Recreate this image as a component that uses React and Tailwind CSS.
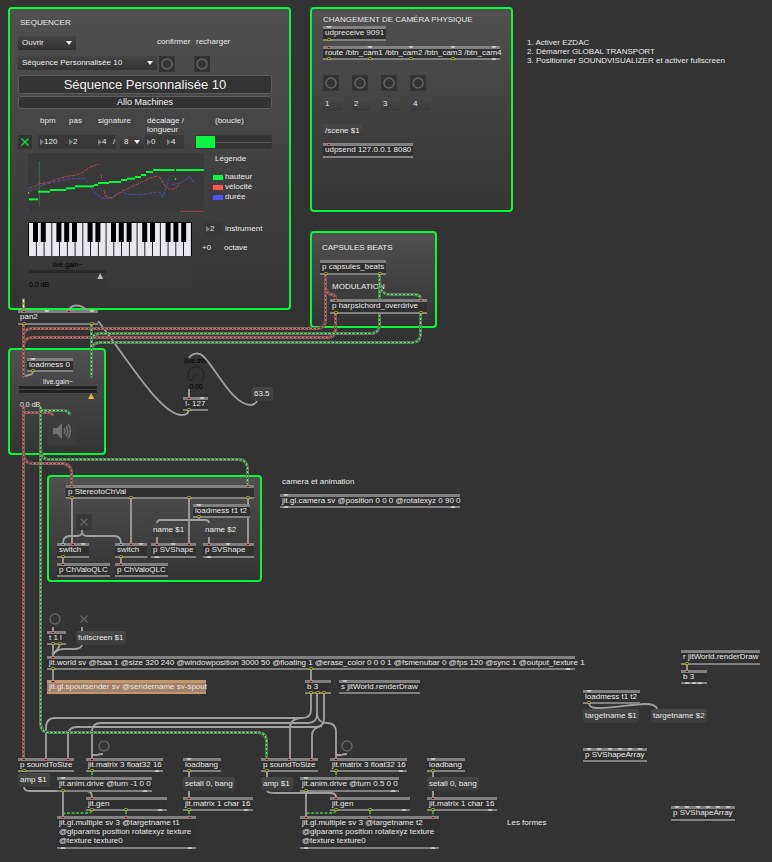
import React from "react";

/* ---------- patch data ---------- */

// Ports are [offset from the left edge, kind]: g = free, y = outlet, r = hot inlet, b = control inlet
const OBJECTS = [
  { text: "udpreceive 9091", x: 323, y: 26, w: 63, h: 15, ins: [[6, "g"]], outs: [[6, "y"]] },
  { text: "route /btn_cam1 /btn_cam2 /btn_cam3 /btn_cam4", x: 323, y: 46, w: 177, h: 14, ins: [[6, "r"], [47, "g"], [88, "g"], [130, "g"], [171, "g"]], outs: [[6, "y"], [47, "y"], [88, "y"], [130, "y"], [171, "g"]] },
  { text: "udpsend 127.0.0.1 8080", x: 323, y: 143, w: 90, h: 15, ins: [[6, "r"]] },
  { text: "p capsules_beats", x: 320, y: 260, w: 66, h: 15, outs: [[6, "y"], [60, "y"]] },
  { text: "p harpsichord_overdrive", x: 330, y: 299, w: 97, h: 15, ins: [[6, "r"], [91, "r"]], outs: [[6, "y"], [91, "y"]] },
  { text: "pan2", x: 18, y: 310, w: 80, h: 15, clear: true, ins: [[6, "r"], [29, "g"], [51, "r"], [74, "g"]], outs: [[6, "y"], [74, "y"]] },
  { text: "loadmess 0", x: 27, y: 358, w: 46, h: 14, ins: [[6, "g"]], outs: [[6, "y"]] },
  { text: "!- 127", x: 183, y: 397, w: 25, h: 14, ins: [[6, "r"], [19, "g"]], outs: [[6, "y"]] },
  { text: "p StereotoChVal", x: 66, y: 485, w: 188, h: 14, ins: [[6, "r"], [182, "r"]], outs: [[6, "y"], [65, "y"], [123, "y"], [182, "y"]] },
  { text: "loadmess t1 t2", x: 193, y: 504, w: 57, h: 14, ins: [[6, "g"]], outs: [[6, "y"]] },
  { text: "switch", x: 57, y: 543, w: 32, h: 15, ins: [[6, "b"], [16, "r"], [26, "g"]], outs: [[6, "y"]] },
  { text: "switch", x: 115, y: 543, w: 32, h: 15, ins: [[6, "b"], [16, "r"], [26, "g"]], outs: [[6, "y"]] },
  { text: "p SVShape", x: 151, y: 543, w: 45, h: 15, ins: [[6, "r"], [22, "g"], [38, "r"]], outs: [[6, "g"]] },
  { text: "p SVShape", x: 203, y: 543, w: 51, h: 15, ins: [[6, "r"], [25, "g"], [45, "r"]], outs: [[6, "g"]] },
  { text: "p ChValoQLC", x: 57, y: 563, w: 53, h: 14, ins: [[6, "r"]] },
  { text: "p ChValoQLC", x: 115, y: 563, w: 53, h: 14, ins: [[6, "r"]] },
  { text: "t 1 l", x: 47, y: 631, w: 19, h: 14, ins: [[6, "r"]], outs: [[6, "y"], [13, "y"]] },
  { text: "jit.world sv @fsaa 1 @size 320 240 @windowposition 3000 50 @floating 1 @erase_color 0 0 0 1 @fsmenubar 0 @fps 120 @sync 1 @output_texture 1", x: 47, y: 656, w: 528, h: 14, ins: [[6, "r"]], outs: [[6, "y"], [264, "y"], [521, "g"]] },
  { text: "jit.gl.spoutsender sv @sendername sv-spout", x: 47, y: 680, w: 159, h: 14, tan: true, ins: [[6, "r"]] },
  { text: "b 3", x: 305, y: 680, w: 26, h: 14, ins: [[6, "r"]], outs: [[6, "y"], [13, "y"], [19, "y"]] },
  { text: "s jitWorld.renderDraw", x: 339, y: 680, w: 81, h: 14, ins: [[6, "g"]] },
  { text: "r jitWorld.renderDraw", x: 681, y: 650, w: 79, h: 15, outs: [[6, "y"]] },
  { text: "b 3", x: 681, y: 670, w: 26, h: 14, ins: [[6, "r"]], outs: [[6, "g"], [13, "g"], [19, "g"]] },
  { text: "loadmess t1 t2", x: 583, y: 690, w: 57, h: 14, ins: [[6, "g"]], outs: [[6, "y"]] },
  { text: "p SVShapeArray", x: 583, y: 748, w: 64, h: 14, ins: [[6, "g"], [16, "g"], [27, "g"], [37, "g"], [47, "g"], [57, "g"]] },
  { text: "p SVShapeArray", x: 671, y: 806, w: 64, h: 15, ins: [[6, "g"], [16, "g"], [27, "g"], [37, "g"], [47, "g"], [57, "g"]] },

  { text: "p soundToSize", x: 18, y: 758, w: 56, h: 14, ins: [[6, "r"], [28, "r"], [50, "r"]], outs: [[6, "y"]] },
  { text: "jit.matrix 3 float32 16", x: 86, y: 758, w: 77, h: 14, ins: [[6, "r"]], outs: [[6, "y"], [71, "g"]] },
  { text: "loadbang", x: 183, y: 758, w: 38, h: 14, ins: [[6, "g"]], outs: [[6, "y"]] },
  { text: "jit.anim.drive @turn -1 0 0", x: 57, y: 777, w: 95, h: 15, ins: [[6, "g"]], outs: [[6, "y"], [88, "g"]] },
  { text: "jit.gen", x: 86, y: 797, w: 81, h: 14, ins: [[6, "r"]], outs: [[6, "y"], [40, "y"], [74, "g"]] },
  { text: "jit.matrix 1 char 16", x: 183, y: 797, w: 70, h: 14, ins: [[6, "r"]], outs: [[6, "y"], [63, "g"]] },
  { text: "jit.gl.multiple sv 3 @targetname t1\n@glparams position rotatexyz texture\n@texture texture0", x: 57, y: 816, w: 139, h: 33, ins: [[6, "r"], [69, "r"], [133, "r"]], outs: [[6, "g"], [133, "g"]] },

  { text: "p soundToSize", x: 261, y: 758, w: 57, h: 14, ins: [[6, "r"], [28, "r"], [50, "r"]], outs: [[6, "y"]] },
  { text: "jit.matrix 3 float32 16", x: 330, y: 758, w: 77, h: 14, ins: [[6, "r"]], outs: [[6, "y"], [71, "g"]] },
  { text: "loadbang", x: 427, y: 758, w: 38, h: 14, ins: [[6, "g"]], outs: [[6, "y"]] },
  { text: "jit.anim.drive @turn 0.5 0 0", x: 300, y: 777, w: 99, h: 15, ins: [[6, "g"]], outs: [[6, "y"], [93, "g"]] },
  { text: "jit.gen", x: 330, y: 797, w: 80, h: 14, ins: [[6, "r"]], outs: [[6, "y"], [40, "y"], [74, "g"]] },
  { text: "jit.matrix 1 char 16", x: 427, y: 797, w: 70, h: 14, ins: [[6, "r"]], outs: [[6, "y"], [63, "g"]] },
  { text: "jit.gl.multiple sv 3 @targetname t2\n@glparams position rotatexyz texture\n@texture texture0", x: 300, y: 816, w: 139, h: 33, ins: [[6, "r"], [69, "r"], [133, "r"]], outs: [[6, "g"], [133, "g"]] },
  { text: "jit.gl.camera sv @position 0 0 0 @rotatexyz 0 90 0", x: 280, y: 494, w: 180, h: 14, ins: [[6, "g"]], outs: [[6, "g"], [173, "g"]] },
];

const MESSAGES = [
  { text: "1", x: 323, y: 97, w: 19 },
  { text: "2", x: 352, y: 97, w: 19 },
  { text: "3", x: 381, y: 97, w: 19 },
  { text: "4", x: 411, y: 97, w: 19 },
  { text: "/scene $1", x: 323, y: 124, w: 39 },
  { text: "63.5", x: 252, y: 387, w: 21 },
  { text: "name $1", x: 151, y: 523, w: 36 },
  { text: "name $2", x: 203, y: 523, w: 36 },
  { text: "fullscreen $1", x: 76, y: 631, w: 50 },
  { text: "amp $1", x: 18, y: 773, w: 32 },
  { text: "amp $1", x: 261, y: 777, w: 32 },
  { text: "setall 0, bang", x: 183, y: 777, w: 52 },
  { text: "setall 0, bang", x: 427, y: 777, w: 52 },
  { text: "targetname $1", x: 583, y: 709, w: 56 },
  { text: "targetname $2", x: 651, y: 709, w: 56 },
];

const COMMENTS = [
  { text: "CHANGEMENT DE CAMÉRA PHYSIQUE", x: 323, y: 15 },
  { text: "CAPSULES BEATS", x: 322, y: 243 },
  { text: "MODULATION", x: 332, y: 282 },
  { text: "camera et animation", x: 282, y: 477 },
  { text: "Les formes", x: 507, y: 818 },
];

const BANGS = [
  { x: 323, y: 75, boxed: true },
  { x: 352, y: 75, boxed: true },
  { x: 381, y: 75, boxed: true },
  { x: 410, y: 75, boxed: true },
  { x: 47, y: 611 },
  { x: 96, y: 738 },
  { x: 339, y: 738 },
];

const CONTROL_WIRES = [
  "M69 310 C72 304 80 304 87 310",
  "M98 321 C125 355 160 415 182 415 Q188 415 189 410",
  "M189 358 C192 353 199 352 203 356 C216 368 232 405 251 405 Q256 404 257 401",
  "M189 389 V397",
  "M33 372 Q33 375 24 376",
  "M72 499 V543", "M131 499 V543", "M189 499 V543", "M248 499 V543",
  "M82 530 V533 Q81 536 76 536 H70 Q63 536 63 543",
  "M82 533 Q83 536 88 536 H114 Q121 536 121 543",
  "M63 558 V563", "M121 558 V563",
  "M157 523 Q157 520 161 520 H205 Q209 520 209 523",
  "M157 536 V543", "M209 536 V543", "M199 516 V520",
  "M53 627 V631", "M82 627 V631",
  "M53 645 V656", "M60 645 Q58 649 53 654",
  "M82 645 Q81 649 74 649 H64 Q56 649 53 655",
  "M53 670 V680", "M311 670 V680",
  "M311 694 V710 Q311 718 302 718 H55 Q46 718 46 728 V758",
  "M317 694 V714 Q317 723 308 723 H101 Q92 723 92 732 V758",
  "M324 694 V719 Q324 727 315 727 H77 Q68 727 68 736 V758",
  "M300 718 Q290 719 290 728 V758",
  "M317 714 Q318 723 327 723 Q336 723 336 732 V758",
  "M322 726 Q312 727 312 736 V758",
  "M92 755 H97 Q100 754 103 754",
  "M336 755 H341 Q344 754 347 754",
  "M24 787 Q24 791 30 791 H86 Q92 791 92 797",
  "M267 772 V777", "M267 791 Q268 793 275 793 H330 Q336 793 336 797",
  "M63 792 V816", "M306 792 V816",
  "M189 772 V777", "M189 790 V797", "M433 772 V777", "M433 790 V797",
  "M687 665 V670",
  "M589 704 Q590 708 597 708 C620 708 630 704 645 704 Q656 704 657 709",
];

const RED_WIRES = [
  "M326 275 V320 Q326 329 317 329 H33 Q24 329 24 337",
  "M326 288 Q328 295 332 295 Q336 295 336 299",
  "M336 314 V330 Q336 338 327 338 H33 Q24 338 24 347",
  "M24 325 V378",
  "M24 407 V758",
  "M24 413 H47 Q53 413 53 416",
  "M24 454 Q24 464 34 464 H62 Q72 464 72 474 V485",
];

const GREEN_WIRES = [
  "M380 275 V324 Q380 334 371 334 H101 Q92 334 92 342",
  "M380 286 Q382 295 390 295 H415 Q421 295 421 299",
  "M421 314 V334 Q421 343 412 343 H101 Q92 343 92 351",
  "M92 325 V378",
  "M41 407 V723 Q41 733 50 733 H258 Q267 733 267 742 V758",
  "M41 411 H64 Q70 411 70 416",
  "M41 451 Q42 460 50 460 H239 Q248 460 248 470 V485",
];

const MATRIX_WIRES = [
  "M92 772 V789", "M92 811 Q91 813 86 813 H66 Q63 813 63 816", "M126 811 V816", "M189 811 V816",
  "M336 772 V789", "M336 811 Q335 813 330 813 H309 Q306 813 306 816", "M370 811 V816", "M433 811 V816",
];

/* ---------- canvas pieces ---------- */

const PORT = {
  g: "bg-[#c4c4c4]",
  y: "border border-[#a5a53a] bg-[#222]",
  r: "border border-[#b07a70] bg-[#222]",
  b: "border border-[#7fb3bd] bg-[#222]",
};

function Port({ offset, kind, outlet }) {
  const free = kind === "g";
  return (
    <span
      className={`absolute w-[5px] -translate-x-1/2 ${free ? "h-[2px]" : "h-[3px]"} ${
        outlet ? "bottom-0 rounded-t-full" : "top-0 rounded-b-full"
      } ${PORT[kind]}`}
      style={{ left: offset }}
    />
  );
}

function PatchObject({ text, x, y, w, h, tan, clear, ins = [], outs = [] }) {
  return (
    <div
      className={`absolute flex flex-col border-t-[3px] border-b-2 ${
        tan ? "border-[#bf9a6c] bg-[#a07f6b]" : clear ? "border-[#808080]" : "border-[#808080] bg-[#303030]"
      }`}
      style={{ left: x, top: y, width: w, height: h }}
    >
      <div className="absolute inset-x-0 -top-[3px] -bottom-[2px]">
        {ins.map(([o, k]) => <Port key={o} offset={o} kind={k} />)}
        {outs.map(([o, k]) => <Port key={o} offset={o} kind={k} outlet />)}
      </div>
      <p className="relative -mt-px whitespace-pre pl-[2px] leading-[9px]">{text}</p>
    </div>
  );
}

function Message({ text, x, y, w }) {
  return (
    <button
      type="button"
      className="absolute h-[14px] rounded-[3px] bg-linear-to-b from-[#484848] to-[#3a3a3a] pl-[2px] text-left leading-[12px] whitespace-nowrap"
      style={{ left: x, top: y, width: w }}
    >
      {text}
    </button>
  );
}

function Bang({ label = "bang", boxed }) {
  return (
    <button type="button" aria-label={label} className={`flex size-4 items-center justify-center ${boxed ? "bg-[#333]" : ""}`}>
      <svg viewBox="0 0 12 12" className="size-3" fill="none" stroke="#646464" strokeWidth="1.4">
        <circle cx="6" cy="6" r="5" />
      </svg>
    </button>
  );
}

function Toggle({ label, green }) {
  return (
    <label className={`relative flex items-center justify-center ${green ? "size-[14px] bg-[#333]" : "size-4"}`}>
      <input type="checkbox" aria-label={label} defaultChecked={green} className="absolute inset-0 appearance-none" />
      <svg viewBox="0 0 8 8" className="size-2" fill="none" stroke={green ? "#08e83c" : "#666"} strokeWidth="1.2">
        <path d="M.5 .5 L7.5 7.5 M7.5 .5 L.5 7.5" />
      </svg>
    </label>
  );
}

function SignalWire({ d, base, color }) {
  return (
    <g>
      <path d={d} stroke={base} strokeWidth="3" />
      <path d={d} stroke="#343434" strokeWidth="1.2" />
      <path d={d} stroke={color} strokeWidth="1.2" strokeDasharray="2.6 1.4" />
    </g>
  );
}

function Wires() {
  return (
    <svg className="pointer-events-none absolute top-0 left-0" width="772" height="862" fill="none">
      {MATRIX_WIRES.map((d) => <path key={d} d={d} stroke="#3fbf4a" strokeWidth="1.6" strokeDasharray="3 1.5" />)}
      {CONTROL_WIRES.map((d) => <path key={d} d={d} stroke="#a0a0a0" strokeWidth="1.8" />)}
      <g transform="translate(-.5 -.5)">
        {RED_WIRES.map((d) => <SignalWire key={d} d={d} base="#7a6464" color="#fa5c5c" />)}
        {GREEN_WIRES.map((d) => <SignalWire key={d} d={d} base="#667a66" color="#4df25a" />)}
        <path d="M24 299 V311" stroke="#808064" strokeWidth="3" />
        <path d="M24 300 V311" stroke="#eeeea0" strokeWidth="1.2" strokeDasharray="3 2" />
      </g>
    </svg>
  );
}

const PANEL = "absolute rounded-[4px] border-2 border-[#08f73c] bg-linear-to-b from-[#505050] to-[#343434]";

/* ---------- sequencer ---------- */

function Caret() {
  return (
    <svg viewBox="0 0 6 4" className="pointer-events-none absolute top-1/2 right-[4px] h-[4px] w-[6px] -translate-y-1/2" fill="#eee">
      <path d="M0 0 H6 L3 4 Z" />
    </svg>
  );
}

function Menu({ label, value, className }) {
  return (
    <div className={`relative h-[14px] bg-linear-to-b from-[#454545] to-[#333] ${className}`}>
      <select aria-label={label} defaultValue={value} className="h-full w-full appearance-none pl-[4px]">
        <option>{value}</option>
      </select>
      <Caret />
    </div>
  );
}

function NumberBox({ label, value, className, plus }) {
  return (
    <label className={`flex h-[14px] items-center bg-[#383838] pl-[2px] ${className}`}>
      {!plus && (
        <svg viewBox="0 0 4 6" className="h-[6px] w-[4px] shrink-0" fill="#808080">
          <path d="M0 0 L4 3 L0 6 Z" />
        </svg>
      )}
      <input aria-label={label} defaultValue={value} className="w-full min-w-0 bg-transparent" />
    </label>
  );
}

function Chart() {
  const steps = [
    [84, 87, 129], [87, 114, 148], [114, 150, 125], [150, 198, 120], [198, 225, 115], [225, 282, 109], [282, 294, 105],
    [294, 327, 99], [327, 363, 96], [363, 381, 90], [381, 405, 86], [405, 423, 81], [423, 438, 75], [438, 459, 66],
    [459, 524, 60], [528, 612, 60],
  ];
  return (
    <svg viewBox="84 9 528 177" className="h-[59px] w-[176px] bg-[#393939]" fill="none">
      <path d="M118 33 V167" stroke="#3c6f48" strokeWidth="3" />
      <g strokeWidth="3" strokeDasharray="12 3">
        <path stroke="#4c4ca8" d="M87 122 L110 116 L125 105 L150 100 L180 92 L215 86 H255 L265 98 M272 112 L285 128 L305 145 H338 L350 130 L365 127 L385 133 H435 L460 127 H480 L488 143 L500 108 L509 80 M515 103 L535 101 L550 95 L570 79 L580 97 M84 178 H88" />
        <path stroke="#a84c4c" d="M85 116 L100 110 L118 101 L145 98 L170 88 L200 79 L225 76 L250 66 L270 52 L290 43 L299 43 M304 74 V86 M311 120 L318 141 L335 143 L350 135 L370 122 L400 108 L430 95 L450 84 L475 77 L483 88 L495 108 L510 118 L525 116 L537 105" />
      </g>
      <path d="M540 184 H610" stroke="#8f5050" strokeWidth="3" />
      <path d="M527 84 V90" stroke="#0bf540" strokeWidth="3" />
      {steps.map(([a, b, y]) => <path key={a} d={`M${a} ${y} H${b}`} stroke="#08f73c" strokeWidth="6" />)}
    </svg>
  );
}

function Keyboard() {
  const white = Array.from({ length: 21 }, (_, i) => i);
  const black = white.filter((i) => ![2, 6].includes(i % 7));
  return (
    <svg viewBox="0 0 164 34" className="h-[34px] w-[164px]" role="img" aria-label="clavier">
      <rect width="164" height="34" fill="#000" />
      {white.map((i) => <rect key={i} x={1 + i * 7.75} y="1" width="6.9" height="33" fill="#e8e8ee" />)}
      {black.map((i) => <rect key={i} x={5 + i * 7.8} y="0" width="5" height="20" fill="#000" />)}
    </svg>
  );
}

function Legend({ color, children }) {
  return (
    <li className="flex h-[10px] items-center gap-[2px]">
      <span className={`h-[5px] w-[10px] ${color}`} />
      {children}
    </li>
  );
}

const GAIN_THUMB =
  "block h-[6px] w-full appearance-none bg-transparent [&::-webkit-slider-thumb]:size-[6px] [&::-webkit-slider-thumb]:appearance-none [&::-webkit-slider-thumb]:[clip-path:polygon(50%_0,100%_100%,0_100%)]";

function Sequencer() {
  return (
    <section className={`${PANEL} top-[7px] left-[8px] w-[283px] px-[8px] pt-[9px] pb-[19px]`}>
      <div className="w-[254px]">
        <h2 className="pl-[2px] leading-[10px]">SEQUENCER</h2>
        <div className="mt-2 flex h-[14px]">
          <Menu label="Fichier" value="Ouvrir" className="w-[58px]" />
          <span className="ml-[81px] w-[39px] leading-[11px]">confirmer</span>
          <span className="leading-[11px]">recharger</span>
        </div>
        <div className="mt-[6px] flex h-4">
          <Menu label="Séquence" value="Séquence Personnalisée 10" className="w-[139px]" />
          <div className="ml-[2px] flex gap-[19px]">
            <Bang label="confirmer" boxed />
            <Bang label="recharger" boxed />
          </div>
        </div>
        <div className="mt-[3px] h-[19px] rounded-[3px] border border-[#5c5c5c] bg-[#333] text-center text-[13px] leading-[18px] text-[#f0f0f0]">
          Séquence Personnalisée 10
        </div>
        <div className="mt-[2px] h-[13px] rounded-[3px] border border-[#5c5c5c] bg-[#333] text-center text-[9px] leading-[11px] text-[#f0f0f0]">
          Allo Machines
        </div>
        <div className="mt-[7px] flex h-[19px] pl-[22px] leading-[9px]">
          <span className="w-[29px]">bpm</span>
          <span className="w-[29px]">pas</span>
          <span className="w-[49px]">signature</span>
          <span className="w-[68px]">décalage /<br />longueur</span>
          <span>(boucle)</span>
        </div>
        <div className="flex h-[14px]">
          <Toggle label="lecture" green />
          <div className="ml-[6px] flex w-[78px] bg-[#383838]">
            <NumberBox label="bpm" value="120" className="w-[29px]" />
            <NumberBox label="pas" value="2" className="w-[29px]" />
            <NumberBox label="signature" value="4" className="w-[17px]" />
            <span className="leading-[13px]">/</span>
          </div>
          <Menu label="division" value="8" className="ml-1 w-[24px]" />
          <div className="ml-px flex w-[39px]">
            <NumberBox label="décalage" value="0" className="w-5" />
            <NumberBox label="longueur" value="4" className="w-[19px]" />
          </div>
          <input
            type="range"
            aria-label="boucle"
            defaultValue="0"
            className="ml-[11px] h-[14px] w-[77px] appearance-none border border-[#383838] bg-[#333] bg-linear-to-b from-[#5c5c5c] to-[#5c5c5c] bg-[length:100%_1px] bg-center bg-no-repeat [&::-webkit-slider-thumb]:h-3 [&::-webkit-slider-thumb]:w-[19px] [&::-webkit-slider-thumb]:appearance-none [&::-webkit-slider-thumb]:bg-[#08f73c]"
          />
        </div>
        <div className="mt-1 flex h-[59px] pl-[10px]">
          <Chart />
          <div className="pl-[9px]">
            <h3 className="pl-[2px] leading-[12px]">Légende</h3>
            <ul className="mt-[7px]">
              <Legend color="bg-[#08f73c]">hauteur</Legend>
              <Legend color="bg-[#ff5252]">vélocité</Legend>
              <Legend color="bg-[#5252ff]">durée</Legend>
            </ul>
          </div>
        </div>
        <div className="mt-[10px] flex h-[34px] pl-[10px]">
          <Keyboard />
          <div className="flex flex-col gap-[5px] pl-2">
            <div className="flex items-center gap-[2px] pl-1">
              <NumberBox label="instrument" value="2" className="w-[19px]" />
              <span>instrument</span>
            </div>
            <div className="flex items-center gap-px">
              <NumberBox label="octave" value="+0" className="w-[23px]" plus />
              <span>octave</span>
            </div>
          </div>
        </div>
        <div className="mt-[5px] flex pl-[11px]">
          <div className="w-[77px] text-[7px] leading-[8px] text-black">
            <p className="text-center">live.gain~</p>
            <div className="mt-px h-[3px] bg-[#2a2a2a]" />
            <input type="range" aria-label="live.gain~" defaultValue="96" className={`${GAIN_THUMB} [&::-webkit-slider-thumb]:bg-[#b8b8b8]`} />
            <p className="mt-[2px]">0.0 dB</p>
          </div>
          <div className="h-[26px] w-[86px] bg-[#393939]" />
        </div>
      </div>
    </section>
  );
}

function Output() {
  return (
    <section className={`${PANEL} top-[348px] left-[8px] w-[98px] px-[9px] pt-[27px] pb-[8px]`}>
      <div className="w-[78px] text-[7px] leading-[9px]">
        <p className="text-center">live.gain~</p>
        <div className="h-[3px] bg-[#222]" />
        <div className="mt-px h-[3px] bg-[#222]" />
        <input type="range" aria-label="volume" defaultValue="96" className={`${GAIN_THUMB} [&::-webkit-slider-thumb]:bg-[#f5b81c]`} />
        <p className="mt-px pl-px">0.0 dB</p>
      </div>
      <button type="button" aria-label="audio" className="mt-[7px] ml-[28px] flex size-[29px] items-center justify-center bg-[#3c3c3c]">
        <svg viewBox="0 0 20 18" className="h-[18px] w-[20px]" fill="none" stroke="#727272" strokeWidth="1.6">
          <path d="M1 6 H5 L10 1 V17 L5 12 H1 Z" fill="#727272" stroke="none" />
          <path d="M12 6 Q14 9 12 12 M14 4 Q17.5 9 14 14 M16 2 Q21 9 16 16" />
        </svg>
      </button>
    </section>
  );
}

function Dial() {
  return (
    <div className="absolute top-[357px] left-[182px] flex w-7 flex-col items-center text-[7px] leading-[8px] text-black">
      <span>live.dial</span>
      <svg viewBox="0 0 18 18" className="mt-px size-[18px]" fill="none" stroke="#202020" strokeWidth="1">
        <path d="M4 15 A8 8 0 1 1 14 15 M4 15 L9 8" />
      </svg>
      <span className="-mt-px">0.00</span>
    </div>
  );
}

export default function App() {
  return (
    <main className="relative min-h-screen bg-[#333] font-['Liberation_Sans',Arial,sans-serif] text-[8px] leading-[10px] text-[#e8e8e8]">
      <Sequencer />
      <div className={`${PANEL} top-[7px] left-[310px] h-[205px] w-[203px]`} />
      <div className={`${PANEL} top-[231px] left-[310px] h-[97px] w-[127px]`} />
      <Output />
      <div className={`${PANEL} top-[475px] left-[47px] h-[107px] w-[215px]`} />
      <Dial />

      <ul className="absolute top-[38px] left-[527px] leading-[9px]">
        <li>1. Activer EZDAC</li>
        <li>2. Démarrer GLOBAL TRANSPORT</li>
        <li>3. Positionner SOUNDVISUALIZER et activer fullscreen</li>
      </ul>
      {COMMENTS.map(({ text, x, y }) => (
        <p key={text} className="absolute whitespace-nowrap" style={{ left: x, top: y }}>{text}</p>
      ))}

      <Wires />

      {OBJECTS.map((o) => <PatchObject key={`${o.x}-${o.y}`} {...o} />)}
      {MESSAGES.map((m) => <Message key={`${m.x}-${m.y}`} {...m} />)}
      {BANGS.map(({ x, y, boxed }) => (
        <div key={`${x}-${y}`} className="absolute" style={{ left: x, top: y }}>
          <Bang boxed={boxed} />
        </div>
      ))}
      <div className="absolute top-[611px] left-[76px]">
        <Toggle label="plein écran" />
      </div>
      <div className="absolute top-[514px] left-[76px] bg-[#383838]">
        <Toggle label="entrée" />
      </div>
    </main>
  );
}
